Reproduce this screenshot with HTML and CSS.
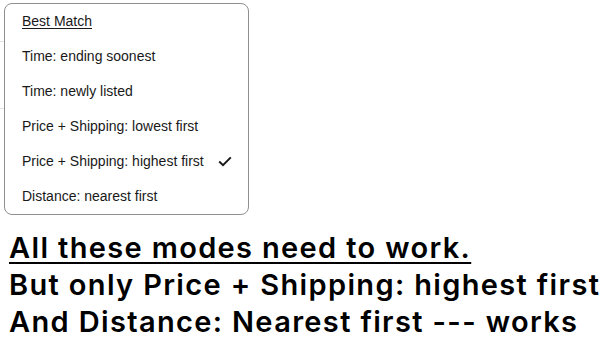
FILE: index.html
```html
<!DOCTYPE html>
<html>
<head>
<meta charset="utf-8">
<link rel="stylesheet" href="styles.css">
</head>
<body>
<div class="page">
  <div class="backdrop">
    <div class="rule rule-top"></div>
    <div class="rule rule-bottom"></div>
  </div>
  <ul class="menu">
    <li class="item"><span class="current">Best Match</span></li>
    <li class="item">Time: ending soonest</li>
    <li class="item">Time: newly listed</li>
    <li class="item">Price + Shipping: lowest first</li>
    <li class="item selected"><span>Price + Shipping: highest first</span>
      <svg class="check" width="14" height="11" viewBox="0 0 14 11" aria-hidden="true"><path d="M1.2 5.6 L5 9.2 L12.8 1.4" fill="none" stroke="#191919" stroke-width="2"/></svg>
    </li>
    <li class="item">Distance: nearest first</li>
  </ul>
  <div class="note">
    <p class="line headline">All these modes need to work.</p>
    <p class="line">But only Price + Shipping: highest first</p>
    <p class="line">And Distance: Nearest first --- works</p>
  </div>
</div>
</body>
</html>
```
FILE: styles.css
```css
html, body {
  margin: 0;
  padding: 0;
  background: #ffffff;
}

.page {
  position: relative;
  width: 615px;
  height: 352px;
  overflow: hidden;
}

.backdrop {
  height: 229px;
  display: flex;
  flex-direction: column;
}

.rule {
  width: 5px;
  height: 1px;
  background: #e3e3e3;
}

.rule-top {
  margin-top: 41px;
}

.rule-bottom {
  margin-top: 66px;
}

.menu {
  position: absolute;
  left: 4px;
  top: 3px;
  width: 245px;
  box-sizing: border-box;
  margin: 0;
  padding: 0;
  list-style: none;
  background: #ffffff;
  border: 1px solid #8f8f8f;
  border-radius: 8px;
  font-family: "Liberation Sans", Arial, sans-serif;
  font-size: 14px;
  color: #191919;
}

.item {
  height: 35px;
  line-height: 35px;
  padding: 0 17px;
  display: flex;
  align-items: center;
  gap: 14px;
  white-space: nowrap;
}

.current {
  text-decoration: underline;
  text-underline-offset: 2px;
}

.check {
  display: block;
  flex: none;
}

.note {
  padding-left: 9px;
  font-family: "Inter", "Liberation Sans", sans-serif;
  font-weight: 600;
  font-size: 29px;
  letter-spacing: 1.35px;
  color: #000000;
}

.line {
  margin: 0;
  line-height: 37px;
  white-space: nowrap;
}

.headline {
  text-decoration: underline;
  text-decoration-thickness: 2px;
  text-underline-offset: 4px;
}
```
